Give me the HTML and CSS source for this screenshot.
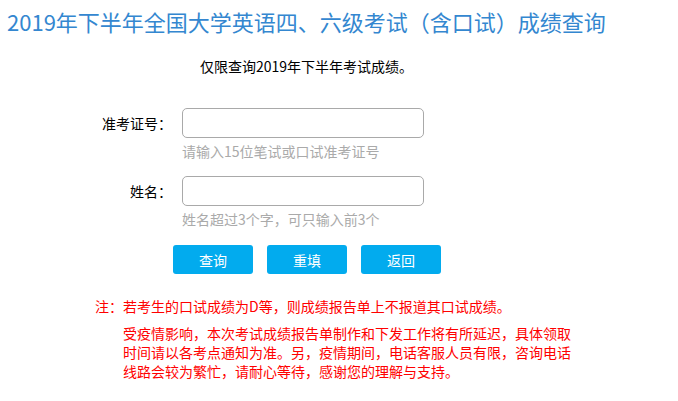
FILE: index.html
```html
<!DOCTYPE html>
<html lang="zh-CN">
<head>
<meta charset="utf-8">
<title>成绩查询</title>
<link rel="stylesheet" href="styles.css">
</head>
<body>
<div class="page">
  <h1 class="title">2019年下半年全国大学英语四、六级考试（含口试）成绩查询</h1>
  <p class="subtitle">仅限查询2019年下半年考试成绩。</p>
  <form class="form">
    <label class="label" for="zkz">准考证号：</label>
    <div class="field">
      <input class="input" id="zkz" type="text">
      <div class="hint">请输入15位笔试或口试准考证号</div>
    </div>
    <label class="label" for="xm">姓名：</label>
    <div class="field">
      <input class="input" id="xm" type="text">
      <div class="hint">姓名超过3个字，可只输入前3个</div>
    </div>
  </form>
  <div class="buttons">
    <button class="btn" type="button">查询</button>
    <button class="btn" type="button">重填</button>
    <button class="btn" type="button">返回</button>
  </div>
  <p class="note">注：若考生的口试成绩为D等，则成绩报告单上不报道其口试成绩。</p>
  <p class="notice">受疫情影响，本次考试成绩报告单制作和下发工作将有所延迟，具体领取时间请以各考点通知为准。另，疫情期间，电话客服人员有限，咨询电话线路会较为繁忙，请耐心等待，感谢您的理解与支持。</p>
</div>
</body>
</html>
```

FILE: styles.css
```css
* { box-sizing: border-box; }
html, body {
  margin: 0;
  padding: 0;
  background: #ffffff;
}
body {
  font-family: "Noto Sans CJK SC", "Noto Sans", sans-serif;
  font-size: 14px;
  color: #000;
}
.page {
  width: 678px;
}
.title {
  margin: 6px 0 0 7px;
  font-size: 22px;
  font-weight: normal;
  line-height: 30px;
  color: #3487d0;
  white-space: nowrap;
}
.subtitle {
  margin: 20px 0 0 200px;
  line-height: 20px;
  font-size: 14px;
}
.form {
  margin-top: 32px;
  display: grid;
  grid-template-columns: 172px 242px;
  column-gap: 10px;
  row-gap: 15px;
}
.label {
  text-align: right;
  line-height: 30px;
  font-size: 14px;
  color: #000;
}
.field {
  display: flex;
  flex-direction: column;
}
.input {
  width: 242px;
  height: 30px;
  margin: 0;
  border: 1px solid #a9a9a9;
  border-radius: 5px;
  font-family: inherit;
  font-size: 14px;
  padding: 0 6px;
  outline: none;
}
.hint {
  margin-top: 3px;
  line-height: 20px;
  font-size: 14px;
  color: #aaaaaa;
}
.buttons {
  margin: 16px 0 0 173px;
  display: flex;
  gap: 14px;
}
.btn {
  width: 80px;
  height: 29px;
  border: none;
  border-radius: 3px;
  background: #02abee;
  color: #fff;
  font-family: inherit;
  font-size: 14px;
  padding: 0;
}
.note {
  margin: 22px 0 0 95px;
  line-height: 20px;
  color: #ff0000;
}
.notice {
  margin: 8px 0 0 123px;
  width: 450px;
  line-height: 19px;
  color: #ff0000;
}
```
